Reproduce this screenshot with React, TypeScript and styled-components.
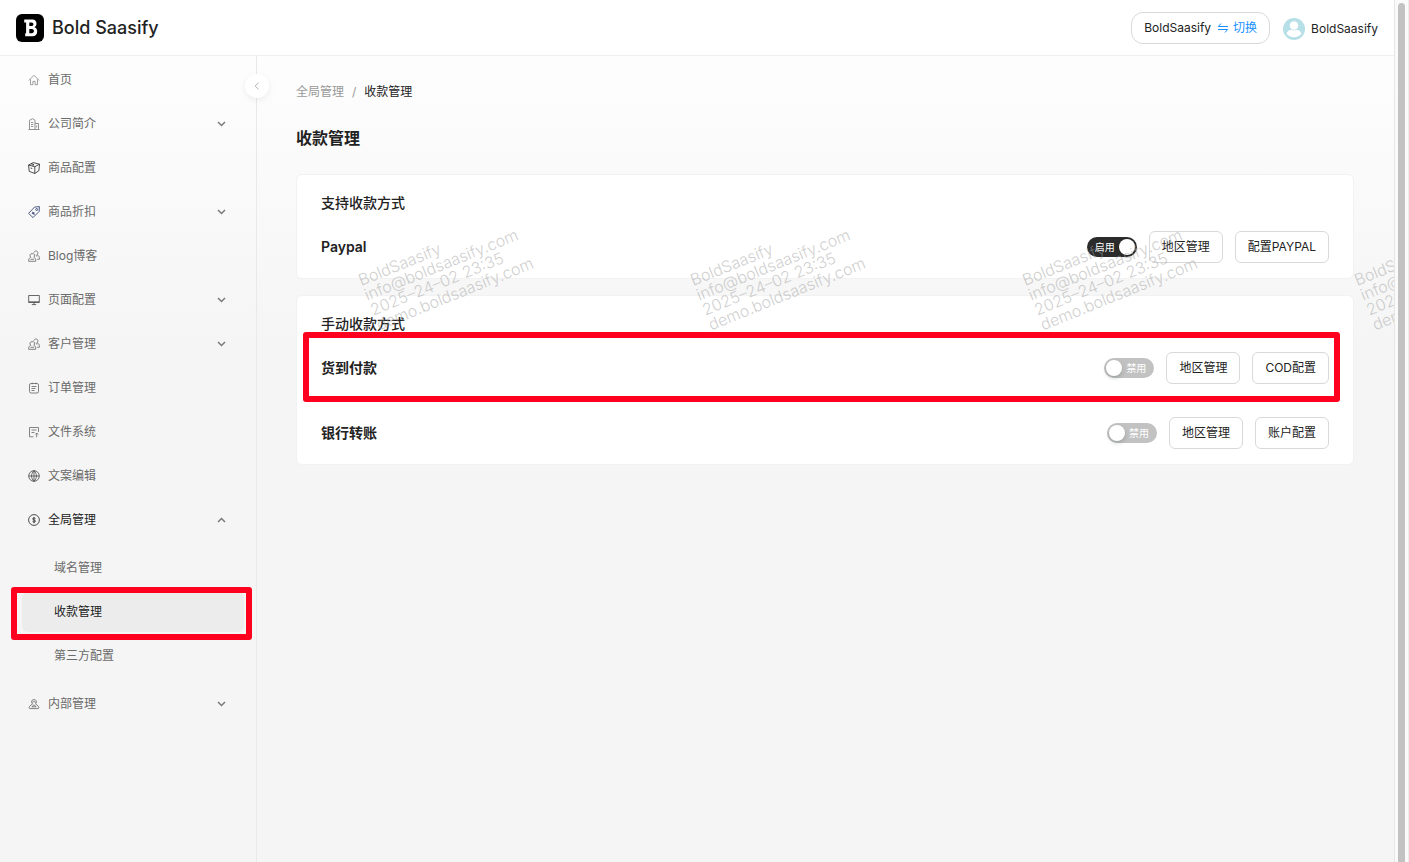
import React from "react";
import styled, { createGlobalStyle, css } from "styled-components";

const GlobalStyle = createGlobalStyle`
  *, *::before, *::after { box-sizing: border-box; }
  body {
    margin: 0;
    font-family: Inter, "Noto Sans CJK SC", sans-serif;
    font-size: 12px;
    line-height: 20px;
    color: #222;
    background: #f5f5f5;
  }
  a { color: inherit; text-decoration: none; }
  button { font: inherit; color: inherit; cursor: pointer; }
`;

const Window = styled.div`
  display: flex;
  min-height: 100vh;
`;

const Page = styled.div`
  position: relative;
  flex: 1;
  min-width: 0;
  display: flex;
  flex-direction: column;
  overflow: hidden;
  background: linear-gradient(#ffffff, #f5f5f5 40%);
`;

const ScrollTrack = styled.div`
  width: 15px;
  padding: 3px 3px 0 3px;
  display: flex;
  background: #fafafa;
  border-left: 1px solid #e6e6e6;
  border-right: 1px solid #ececec;
`;

const ScrollThumb = styled.div`
  flex: 1;
  border-radius: 4px 4px 0 0;
  background: #c2c2c2;
`;

const Header = styled.header`
  height: 56px;
  display: flex;
  align-items: center;
  justify-content: space-between;
  padding: 0 16px;
  background: #fff;
  border-bottom: 1px solid #f0f0f0;
`;

const Brand = styled.a`
  display: flex;
  align-items: center;
  gap: 8px;
  font-size: 18px;
  font-weight: 500;
  line-height: 28px;
  color: #222;
`;

const Account = styled.div`
  display: flex;
  align-items: center;
  gap: 13px;
`;

const SwitchButton = styled.button`
  height: 32px;
  display: flex;
  align-items: center;
  gap: 6px;
  padding: 0 12px;
  background: #fff;
  border: 1px solid #d9d9d9;
  border-radius: 12px;
`;

const SwitchAction = styled.span`
  display: flex;
  align-items: center;
  gap: 4px;
  color: #1890ff;
`;

const User = styled.a`
  display: flex;
  align-items: center;
  gap: 6px;
  padding-top: 3px;
`;

const Body = styled.div`
  flex: 1;
  display: flex;
`;

const Sidebar = styled.aside`
  position: relative;
  width: 257px;
  flex-shrink: 0;
  padding: 4px 12px;
  border-right: 1px solid #e9e9e9;
`;

const CollapseButton = styled.button`
  position: absolute;
  top: 18px;
  right: -13px;
  width: 24px;
  height: 24px;
  padding: 0;
  display: flex;
  align-items: center;
  justify-content: center;
  border: 0;
  border-radius: 50%;
  background: #fff;
  color: #b0b0b0;
  box-shadow: 0 2px 8px -2px rgba(0, 0, 0, 0.12);
`;

const Menu = styled.ul`
  list-style: none;
  margin: 0;
  padding: 0;
  display: flex;
  flex-direction: column;
  gap: 4px;
`;

const SubMenu = styled(Menu)`
  padding: 8px 0 4px 10px;
`;

const MenuLink = styled.a<{ $active?: boolean }>`
  height: 40px;
  display: flex;
  align-items: center;
  gap: 8px;
  padding: 0 18px 0 16px;
  border-radius: 6px;
  color: ${(p) => (p.$active ? "#222" : "#6a6a6a")};
`;

const MenuLabel = styled.span`
  flex: 1;
`;

const marked = css<{ $inset: string }>`
  position: relative;
  &::after {
    content: "";
    position: absolute;
    inset: ${(p) => p.$inset};
    border: 6px solid #ff001f;
    border-radius: 3px;
    pointer-events: none;
  }
`;

const SubLink = styled.a<{ $active?: boolean; $inset: string }>`
  height: 40px;
  display: flex;
  align-items: center;
  padding: 0 32px;
  border-radius: 6px;
  color: ${(p) => (p.$active ? "#222" : "#6a6a6a")};
  background: ${(p) => (p.$active ? "#ececec" : "transparent")};
  ${(p) => p.$active && marked}
`;

const Main = styled.main`
  flex: 1;
  min-width: 0;
  padding: 26px 40px 40px 39px;
`;

const Breadcrumb = styled.nav`
  display: flex;
  gap: 8px;
  color: #999;
`;

const Crumb = styled.span`
  color: #222;
`;

const Title = styled.h1`
  margin: 24px 0;
  font-size: 16px;
  font-weight: 600;
  line-height: 24px;
`;

const Cards = styled.div`
  display: flex;
  flex-direction: column;
  gap: 16px;
`;

const Card = styled.section`
  padding: 16px 24px 15px;
  background: #fff;
  border: 1px solid #f2f2f2;
  border-radius: 6px;
`;

const CardTitle = styled.h2`
  margin: 0 0 16px;
  font-size: 14px;
  font-weight: 500;
  line-height: 24px;
`;

const Rows = styled.div`
  display: flex;
  flex-direction: column;
  gap: 33px;
`;

const Row = styled.div<{ $marked?: boolean; $inset: string }>`
  min-height: 32px;
  display: flex;
  align-items: center;
  gap: 12px;
  ${(p) => p.$marked && marked}
`;

const RowName = styled.h3`
  flex: 1;
  margin: 0;
  font-size: 14px;
  font-weight: 600;
  line-height: 24px;
`;

const Button = styled.button`
  height: 32px;
  padding: 0 12px;
  background: #fff;
  border: 1px solid #d9d9d9;
  border-radius: 6px;
`;

const Switch = styled.label<{ $on: boolean }>`
  position: relative;
  width: 50px;
  height: 20px;
  display: flex;
  align-items: center;
  justify-content: space-between;
  flex-direction: ${(p) => (p.$on ? "row" : "row-reverse")};
  padding: ${(p) => (p.$on ? "0 2px 0 8px" : "0 8px 0 2px")};
  border-radius: 10px;
  font-size: 10px;
  color: #fff;
  background: ${(p) => (p.$on ? "#2b2b2b" : "#c2c2c2")};
  cursor: pointer;
`;

const SwitchInput = styled.input`
  position: absolute;
  inset: 0;
  margin: 0;
  opacity: 0;
`;

const Knob = styled.span`
  width: 16px;
  height: 16px;
  border-radius: 50%;
  background: #fff;
  box-shadow: 0 2px 4px rgba(0, 35, 11, 0.2);
`;

const WatermarkLayer = styled.div`
  position: absolute;
  top: 273px;
  left: 356px;
  display: flex;
  pointer-events: none;
`;

const WatermarkTile = styled.div`
  width: 332px;
  flex-shrink: 0;
`;

const WatermarkText = styled.div`
  transform: rotate(-22deg);
  transform-origin: 0 0;
  font-size: 16px;
  font-weight: 300;
  line-height: 16px;
  color: rgba(160, 160, 160, 0.5);
  white-space: pre-line;
`;

const Logo = () => (
  <svg width="28" height="28" viewBox="0 0 28 28" aria-hidden="true">
    <rect width="28" height="28" rx="6" fill="#000" />
    <path
      fillRule="evenodd"
      fill="#fff"
      d="M8.200 5.500h8.300c2.600 0 4 1.700 4 4 0 1.700-.7 3-2 3.700 1.700.6 2.700 2.100 2.700 4.200 0 2.900-1.800 4.900-4.700 4.900H9.200v-3.100h.9V8.500H8.200zM13.300 8.500v3.600h2.200c1.200 0 1.900-.7 1.900-1.800s-.7-1.800-1.900-1.800zM13.300 15v4.200h2.500c1.300 0 2.100-.8 2.100-2.100S17.100 15 15.800 15z"
    />
  </svg>
);

const Avatar = () => (
  <svg width="22" height="22" viewBox="0 0 22 22" aria-hidden="true">
    <circle cx="11" cy="11" r="11" fill="#b7dfe8" />
    <circle cx="11" cy="7.500" r="4.300" fill="#fff" />
    <path d="M3.500 15.500C4.500 12.600 7 11.800 8.500 11.800c1.600 1 3.400 1 5 0 1.500 0 4 .8 5 3.700-1.600 2.300-4.300 3.700-7.500 3.700s-5.900-1.400-7.500-3.700z" fill="#fff" />
  </svg>
);

const SwapIcon = () => (
  <svg width="12" height="12" viewBox="0 0 12 12" fill="none" stroke="currentColor" strokeWidth="1" aria-hidden="true">
    <path d="M4 1.500 1.300 4.500H11M1 7.500h9.700L8 10.500" />
  </svg>
);

const ArrowIcon = ({ up }: { up?: boolean }) => (
  <svg width="9" height="9" viewBox="0 0 9 9" fill="none" stroke="#7a7a7a" strokeWidth="1.500" aria-hidden="true">
    <path d={up ? "M1 6 4.500 2.500 8 6" : "M1 2 4.500 5.500 8 2"} />
  </svg>
);

const icons: Record<string, React.ReactNode> = {
  home: <path d="M.8 6.500 6 1.300l5.200 5.200M2.500 5.300v5.400h2.400V7.400h2.200v3.300h2.400V5.300" />,
  company: <path d="M.5 11.500h11M1.500 11.500V2.300L4.500.7l2.500 1.600v9.200M7 5.500h3.500v6M3 4.500h2.300M3 6.500h2.300M3 8.500h2.300M8.700 7.500v2" />,
  product: <path d="M6.800 11.500 1.200 9.300.6 3 5.200.6l6.300 1.600-.6 6.500zM.6 3l6.200 1.700 4.700-2.500M6.800 4.700v6.800M3 1.800l3 .8-1.500 1.200M2.500 6l1.800.5" />,
  discount: <path d="M.6 7.400 6.600 1l4.800-.4-.2 4.800-6.200 6.200zM7.700 3.500a1 1 0 1 0 2 0 1 1 0 1 0-2 0M4 5.800l2.700 2.500M3.800 7.600h1.800M5.800 6v2.600" />,
  people: <path d="M4.300 3.700a1.900 1.900 0 0 1 1.400 3.500C7.300 7.800 8 9.300 7.700 11.300H.7C.4 9.300 1.200 7.800 2.900 7.200A1.900 1.900 0 0 1 4.300 3.700zM2.500 9.300h3.500M5.800 2.700C6.500.300 9.800.5 9.900 2.800c0 1-.4 1.600-1 2C11 5.500 11.700 7 11.300 9.300H9.200M7.800 5.500l1.400.8" />,
  screen: <path d="M.7 1.500h10.600v7H.7zM.7 7.800h10.600M6 8.500v2M3.800 10.600h4.400" />,
  order: <path d="M3 1.500h6q1.500 0 1.500 1.500v6.500q0 1.500-1.500 1.500H3q-1.500 0-1.500-1.500V3Q1.500 1.500 3 1.500zM4.300.700v1.500M7.700.700v1.500M3.500 4.500h5M3.500 6.500h4M3.500 8.500h3" />,
  file: <path d="M5.500 10.800h-4v-9.300h9v4.500M3.500 4h5M3.500 6.500h3M8.700 11.300V7M7.300 8.500l1.400-1.500 1.500 1.500" />,
  globe: <path d="M.7 6a5.300 5.300 0 1 0 10.600 0A5.300 5.300 0 1 0 .7 6zM.7 6h10.600M6 .7v10.600M6 .7C2.700 4 2.700 8 6 11.300M6 .7C9.300 4 9.300 8 6 11.300" />,
  dollar: <path d="M.6 6a5.400 5.400 0 1 0 10.800 0A5.400 5.400 0 1 0 .6 6zM7.500 4.600C7 3.700 4.600 3.700 4.600 4.900c0 1.400 2.900.8 2.900 2.200 0 1.300-2.500 1.200-3 .2M6 3v6.200" />,
  team: <path d="M4.500 5.800C3 5 3 1.700 6 1.600c3 .1 3 3.400 1.500 4.200M3.800 4.500l2-1 2.400 1M4.500 5.800 1.600 8.300C.8 9.500 1.200 10.600 2 10.600h8c.8 0 1.200-1.100.4-2.300L7.500 5.800M3.800 8.800 6 6.800l2.200 2z" />,
};

const Glyph = ({ name, color }: { name: string; color: string }) => (
  <svg width="12" height="12" viewBox="0 0 12 12" fill="none" stroke={color} strokeWidth="0.800" aria-hidden="true">
    {icons[name]}
  </svg>
);

type Item = {
  icon: string;
  label: string;
  color?: string;
  expandable?: boolean;
  children?: string[];
};

const menu: Item[] = [
  { icon: "home", label: "首页", color: "#888" },
  { icon: "company", label: "公司简介", color: "#777", expandable: true },
  { icon: "product", label: "商品配置", color: "#222" },
  { icon: "discount", label: "商品折扣", color: "#26346b", expandable: true },
  { icon: "people", label: "Blog博客" },
  { icon: "screen", label: "页面配置", color: "#444", expandable: true },
  { icon: "people", label: "客户管理", expandable: true },
  { icon: "order", label: "订单管理" },
  { icon: "file", label: "文件系统" },
  { icon: "globe", label: "文案编辑", color: "#444" },
  { icon: "dollar", label: "全局管理", color: "#222", expandable: true, children: ["域名管理", "收款管理", "第三方配置"] },
  { icon: "team", label: "内部管理", expandable: true },
];

type Method = { name: string; on?: boolean; marked?: boolean; action: string };

const groups: { title: string; methods: Method[] }[] = [
  { title: "支持收款方式", methods: [{ name: "Paypal", on: true, action: "配置PAYPAL" }] },
  {
    title: "手动收款方式",
    methods: [
      { name: "货到付款", marked: true, action: "COD配置" },
      { name: "银行转账", action: "账户配置" },
    ],
  },
];

const watermark = "BoldSaasify\ninfo@boldsaasify.com\n2025–24–02 23:35\ndemo.boldsaasify.com";

const Toggle = ({ name, initial }: { name: string; initial: boolean }) => {
  const [on, setOn] = React.useState(initial);
  return (
    <Switch $on={on}>
      <SwitchInput type="checkbox" role="switch" aria-label={name} checked={on} onChange={() => setOn(!on)} />
      <span>{on ? "启用" : "禁用"}</span>
      <Knob />
    </Switch>
  );
};

export default function App() {
  return (
    <Window>
      <GlobalStyle />
      <Page>
        <Header>
          <Brand href="#">
            <Logo />
            Bold Saasify
          </Brand>
          <Account>
            <SwitchButton>
              BoldSaasify
              <SwitchAction>
                <SwapIcon />
                切换
              </SwitchAction>
            </SwitchButton>
            <User href="#">
              <Avatar />
              BoldSaasify
            </User>
          </Account>
        </Header>
        <Body>
          <Sidebar>
            <Menu>
              {menu.map((item) => (
                <li key={item.label}>
                  <MenuLink href="#" $active={!!item.children}>
                    <Glyph name={item.icon} color={item.color ?? "#666"} />
                    <MenuLabel>{item.label}</MenuLabel>
                    {item.expandable && <ArrowIcon up={!!item.children} />}
                  </MenuLink>
                  {item.children && (
                    <SubMenu>
                      {item.children.map((label) => (
                        <li key={label}>
                          <SubLink href="#" $active={label === "收款管理"} $inset="-5px -8px -8px -11px">
                            {label}
                          </SubLink>
                        </li>
                      ))}
                    </SubMenu>
                  )}
                </li>
              ))}
            </Menu>
            <CollapseButton aria-label="收起菜单">
              <svg width="8" height="8" viewBox="0 0 8 8" fill="none" stroke="currentColor" aria-hidden="true">
                <path d="M5.500 .700 2.200 4l3.300 3.300" />
              </svg>
            </CollapseButton>
          </Sidebar>
          <Main>
            <Breadcrumb>
              <a href="#">全局管理</a>
              <span>/</span>
              <Crumb>收款管理</Crumb>
            </Breadcrumb>
            <Title>收款管理</Title>
            <Cards>
              {groups.map((group) => (
                <Card key={group.title}>
                  <CardTitle>{group.title}</CardTitle>
                  <Rows>
                    {group.methods.map((m) => (
                      <Row key={m.name} $marked={m.marked} $inset="-20px -11px -18px -18px">
                        <RowName>{m.name}</RowName>
                        <Toggle name={m.name} initial={!!m.on} />
                        <Button>地区管理</Button>
                        <Button>{m.action}</Button>
                      </Row>
                    ))}
                  </Rows>
                </Card>
              ))}
            </Cards>
          </Main>
        </Body>
        <WatermarkLayer aria-hidden="true">
          {[0, 1, 2, 3].map((i) => (
            <WatermarkTile key={i}>
              <WatermarkText>{watermark}</WatermarkText>
            </WatermarkTile>
          ))}
        </WatermarkLayer>
      </Page>
      <ScrollTrack>
        <ScrollThumb />
      </ScrollTrack>
    </Window>
  );
}
